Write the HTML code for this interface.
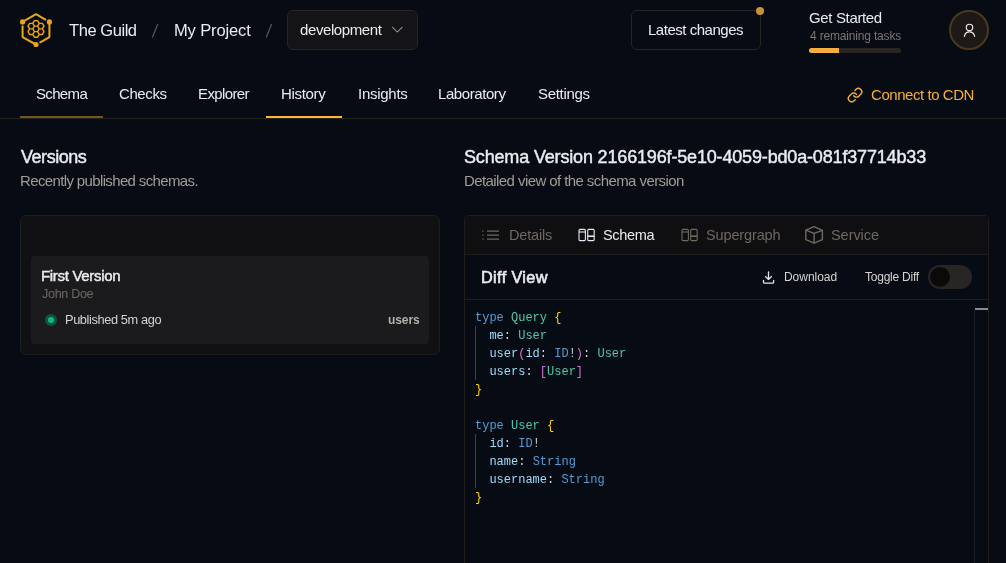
<!DOCTYPE html>
<html><head><meta charset="utf-8">
<style>
html,body{margin:0;padding:0}
body{width:1006px;height:563px;overflow:hidden;background:#070b13;position:relative;font-family:"Liberation Sans",sans-serif;color:#e4e7ed}
.a{position:absolute;white-space:nowrap;line-height:1;will-change:transform}
.sb{-webkit-text-stroke:0.45px currentColor}
.box{position:absolute;box-sizing:border-box}
</style></head>
<body>
<!-- HEADER -->
<svg class="a" style="left:0;top:0" width="60" height="60" viewBox="0 0 60 60">
  <g fill="none" stroke="#eaa616" stroke-width="2" stroke-linecap="round" stroke-linejoin="round">
    <path d="M22.58 21.9 L36 14.2 L45.4 19.6"/>
    <path d="M49.42 21.9 L49.42 37.1 L40.2 42.3"/>
    <path d="M22.58 26.3 L22.58 37.1 L36 44.5"/>
  </g>
  <g fill="#eaa616">
    <circle cx="22.58" cy="21.9" r="2.6"/>
    <circle cx="49.42" cy="21.9" r="2.6"/>
    <circle cx="36" cy="44.5" r="2.6"/>
  </g>
  <path fill="none" stroke="#eaa616" stroke-width="1.4" stroke-linejoin="round" d="M39.20 28.90 37.60 31.67 34.40 31.67 32.80 28.90 34.40 26.13 37.60 26.13ZM39.20 23.36 37.60 26.13 34.40 26.13 32.80 23.36 34.40 20.59 37.60 20.59ZM39.20 34.44 37.60 37.21 34.40 37.21 32.80 34.44 34.40 31.67 37.60 31.67ZM34.40 26.13 32.80 28.90 29.60 28.90 28.00 26.13 29.60 23.36 32.80 23.36ZM44.00 26.13 42.40 28.90 39.20 28.90 37.60 26.13 39.20 23.36 42.40 23.36ZM34.40 31.67 32.80 34.44 29.60 34.44 28.00 31.67 29.60 28.90 32.80 28.90ZM44.00 31.67 42.40 34.44 39.20 34.44 37.60 31.67 39.20 28.90 42.40 28.90Z"/>
</svg>
<svg class="a" style="left:0;top:0" width="300" height="50"><path d="M157.6 24.4 L152.6 37 M271.4 24.4 L266.4 37" stroke="#5a534e" stroke-width="1.3" stroke-linecap="round"/></svg>


<div class="box" style="left:287px;top:10px;width:131px;height:40px;border:1px solid #292524;border-radius:6px;background:#141316"></div>
<svg class="a" style="left:388px;top:22px" width="18" height="16" viewBox="0 0 18 16">
  <path d="M4.6 5.3 L9.3 10 L14 5.3" fill="none" stroke="#9a948f" stroke-width="1.05" stroke-linecap="round" stroke-linejoin="round"/>
</svg>

<div class="box" style="left:631px;top:10px;width:130px;height:40px;border:1px solid #292524;border-radius:6px"></div>
<div class="box" style="left:756px;top:7px;width:8px;height:8px;border-radius:50%;background:#c8923a"></div>

<div class="box" style="left:809px;top:48px;width:92px;height:5px;border-radius:3px;background:#292524;overflow:hidden"><div style="width:30px;height:5px;background:#f5ae3d"></div></div>

<div class="box" style="left:949px;top:10px;width:40px;height:40px;border-radius:50%;border:2px solid #4a391d;background:#1c1917"></div>


<svg class="a" style="left:949px;top:10px" width="40" height="40" viewBox="0 0 40 40">
  <g fill="none" stroke="#f0efee" stroke-width="1.15" stroke-linecap="round">
    <circle cx="20.5" cy="17.4" r="3.2"/>
    <path d="M15.4 26.4 A5.2 5.6 0 0 1 25.6 26.4"/>
  </g>
</svg>
<svg class="a" style="left:846.6px;top:86.6px" width="16.2" height="16.2" viewBox="0 0 24 24">
  <g fill="none" stroke="#f5ae3d" stroke-width="2.1" stroke-linecap="round" stroke-linejoin="round">
    <path d="M10 13a5 5 0 0 0 7.54.54l3-3a5 5 0 0 0-7.07-7.07l-1.72 1.71"/>
    <path d="M14 11a5 5 0 0 0-7.54-.54l-3 3a5 5 0 0 0 7.07 7.070l1.71-1.71"/>
  </g>
</svg>
<!-- NAV -->
<div class="box" style="left:20px;top:116px;width:83px;height:2px;background:#72561f"></div>
<div class="box" style="left:266px;top:116px;width:76px;height:2px;background:#fbb535"></div>
<div class="box" style="left:0;top:118px;width:1006px;height:1px;background:#25211f"></div>


<!-- LEFT -->

<div class="box" style="left:20px;top:215px;width:420px;height:140px;border:1px solid #1e1c1c;border-radius:6px;background:#111114"></div>
<div class="box" style="left:31px;top:256px;width:398px;height:88px;border-radius:4px;background:#1b1a1c"></div>
<div class="box" style="left:45px;top:314px;width:12px;height:12px;border-radius:50%;background:#0c5640"></div>
<div class="box" style="left:48px;top:317px;width:6px;height:6px;border-radius:50%;background:#10b981"></div>

<!-- RIGHT -->


<!-- PANEL -->
<div class="box" style="left:464px;top:215px;width:525px;height:400px;border:1px solid #1f1c1a;border-radius:4px;background:#070b13;overflow:hidden">
  <div class="box" style="left:0;top:0;width:523px;height:39px;background:#0f0f11;border-bottom:1px solid #1f1c1a"></div>
  <div class="box" style="left:0;top:83px;width:523px;height:1px;background:#1f1c1a"></div>
  <div class="box" style="left:509px;top:94px;width:1px;height:400px;background:#1a1d23"></div>
  <div class="box" style="left:510px;top:92px;width:13px;height:2px;background:#8a8a8a"></div>
</div>
<svg class="a" style="left:480px;top:227px" width="22" height="16" viewBox="0 0 22 16">
  <g stroke="#6f6863" stroke-width="1.25" fill="none">
    <path d="M2.3 4h1.2M2.3 8h1.2M2.3 12h1.2"/>
    <path d="M7 4h12M7 8h12M7 12h12"/>
  </g>
</svg>
<svg class="a" style="left:576px;top:226px" width="22" height="18" viewBox="0 0 22 18">
  <g stroke="#e4e7ed" stroke-width="1.1" fill="none">
    <rect x="3" y="3.4" width="6.4" height="11.2" rx="1"/>
    <path d="M3 6h6.4"/>
    <rect x="11.7" y="3.4" width="6.5" height="11.2" rx="1"/>
    <path d="M11.7 10.2h6.5" stroke-width="1.6"/>
  </g>
</svg>
<svg class="a" style="left:679px;top:226px" width="22" height="18" viewBox="0 0 22 18">
  <g stroke="#6f6863" stroke-width="1.1" fill="none">
    <rect x="3" y="3.4" width="6.4" height="11.2" rx="1"/>
    <path d="M3 6h6.4"/>
    <rect x="11.7" y="3.4" width="6.5" height="11.2" rx="1"/>
    <path d="M11.7 10.2h6.5" stroke-width="1.6"/>
  </g>
</svg>
<svg class="a" style="left:802px;top:224px" width="24" height="22" viewBox="0 0 24 22">
  <g stroke="#6f6863" stroke-width="1.4" fill="none" stroke-linejoin="round">
    <path d="M12.1 2.6 L20.4 6.4 L20.4 15.6 L12.1 19.2 L3.8 15.6 L3.8 6.2 Z"/>
    <path d="M3.8 6.2 L12.1 9.4 L20.4 6.4 M12.1 9.4 L12.1 19.2"/>
  </g>
</svg>

<svg class="a" style="left:758px;top:266px" width="22" height="22" viewBox="0 0 22 22">
  <g stroke="#e4e7ed" stroke-width="1.3" fill="none" stroke-linecap="round" stroke-linejoin="round">
    <path d="M10.5 5.9 V13.3 M7.5 10.6 L10.5 13.4 L13.5 10.6"/>
    <path d="M5.5 14.3 V16.2 Q5.5 17.2 6.5 17.2 H14.6 Q15.6 17.2 15.6 16.2 V14.3"/>
  </g>
</svg>
<div class="box" style="left:928px;top:265px;width:44px;height:24px;border-radius:12px;background:#292524"></div>
<div class="box" style="left:930px;top:267px;width:20px;height:20px;border-radius:50%;background:#0c0a09"></div>

<!-- CODE -->
<style>
.code{will-change:transform;position:absolute;left:475px;top:309px;font-family:"Liberation Mono",monospace;font-size:12px;line-height:18px;white-space:pre;color:#d4d4d4}
.k{color:#569cd6}.t{color:#4ec9b0}.f{color:#9cdcfe}.b1{color:#ffd700}.b2{color:#da70d6}.s{color:#569cd6}
</style>
<div class="box" style="left:475px;top:326px;width:1px;height:54px;background:#404040"></div>
<div class="box" style="left:475px;top:434px;width:1px;height:54px;background:#404040"></div>
<div class="code"><span class="k">type</span> <span class="t">Query</span> <span class="b1">{</span>
  <span class="f">me</span>: <span class="t">User</span>
  <span class="f">user</span><span class="b2">(</span><span class="f">id</span>: <span class="s">ID</span>!<span class="b2">)</span>: <span class="t">User</span>
  <span class="f">users</span>: <span class="b2">[</span><span class="t">User</span><span class="b2">]</span>
<span class="b1">}</span>

<span class="k">type</span> <span class="t">User</span> <span class="b1">{</span>
  <span class="f">id</span>: <span class="s">ID</span>!
  <span class="f">name</span>: <span class="s">String</span>
  <span class="f">username</span>: <span class="s">String</span>
<span class="b1">}</span></div>
<!-- TEXT -->
<div class="a" style="left:68.9px;top:22px;font-size:16.5px;letter-spacing:-0.438px;color:#eaecf0">The Guild</div>
<div class="a" style="left:173.6px;top:22px;font-size:16.5px;letter-spacing:-0.133px;color:#eaecf0">My Project</div>
<div class="a" style="left:299.6px;top:22px;font-size:15px;letter-spacing:-0.4px;color:#eaecf0">development</div>
<div class="a" style="left:648.1px;top:22px;font-size:15px;letter-spacing:-0.477px;color:#eaecf0">Latest changes</div>
<div class="a" style="left:808.5px;top:10px;font-size:15px;letter-spacing:-0.35px;color:#eaecf0">Get Started</div>
<div class="a" style="left:809.5px;top:30px;font-size:12px;letter-spacing:-0.176px;color:#7c7570">4 remaining tasks</div>
<div class="a" style="left:35.9px;top:86px;font-size:15px;letter-spacing:-0.66px;color:#eaecf0">Schema</div>
<div class="a" style="left:118.5px;top:86px;font-size:15px;letter-spacing:-0.4px;color:#eaecf0">Checks</div>
<div class="a" style="left:198.3px;top:86px;font-size:15px;letter-spacing:-0.628px;color:#eaecf0">Explorer</div>
<div class="a" style="left:281.3px;top:86px;font-size:15px;letter-spacing:-0.333px;color:#eaecf0">History</div>
<div class="a" style="left:357.6px;top:86px;font-size:15px;letter-spacing:-0.272px;color:#eaecf0">Insights</div>
<div class="a" style="left:438.3px;top:86px;font-size:15px;letter-spacing:-0.423px;color:#eaecf0">Laboratory</div>
<div class="a" style="left:537.7px;top:86px;font-size:15px;letter-spacing:-0.3px;color:#eaecf0">Settings</div>
<div class="a" style="left:870.5px;top:87px;font-size:15px;letter-spacing:-0.446px;color:#f5ae3d">Connect to CDN</div>
<div class="a" style="left:21.1px;top:148px;font-size:18px;letter-spacing:-0.457px;color:#eaecf0;-webkit-text-stroke:0.45px #eaecf0">Versions</div>
<div class="a" style="left:20.0px;top:173px;font-size:15px;letter-spacing:-0.635px;color:#a29c97">Recently published schemas.</div>
<div class="a" style="left:40.8px;top:268px;font-size:15px;letter-spacing:-0.317px;color:#eaecf0;-webkit-text-stroke:0.45px #eaecf0">First Version</div>
<div class="a" style="left:41.5px;top:288px;font-size:12.5px;letter-spacing:-0.286px;color:#6f6863">John Doe</div>
<div class="a" style="left:65.0px;top:314px;font-size:12.8px;letter-spacing:-0.393px;color:#d6d3d1">Published 5m ago</div>
<div class="a" style="left:387.9px;top:314px;font-size:12px;letter-spacing:-0.1px;color:#b5b0ab;font-weight:700">users</div>
<div class="a" style="left:463.9px;top:148px;font-size:18px;letter-spacing:-0.164px;color:#eaecf0;-webkit-text-stroke:0.45px #eaecf0">Schema Version 2166196f-5e10-4059-bd0a-081f37714b33</div>
<div class="a" style="left:463.5px;top:173px;font-size:15px;letter-spacing:-0.582px;color:#a29c97">Detailed view of the schema version</div>
<div class="a" style="left:508.9px;top:228px;font-size:14.5px;letter-spacing:-0.167px;color:#6f6863">Details</div>
<div class="a" style="left:603.2px;top:228px;font-size:14.5px;letter-spacing:-0.32px;color:#eaecf0">Schema</div>
<div class="a" style="left:706.2px;top:228px;font-size:14.5px;letter-spacing:-0.133px;color:#6f6863">Supergraph</div>
<div class="a" style="left:830.9px;top:228px;font-size:14.5px;letter-spacing:-0.051px;color:#6f6863">Service</div>
<div class="a" style="left:481.0px;top:269px;font-size:16.3px;letter-spacing:0.35px;color:#eaecf0;-webkit-text-stroke:0.6px #eaecf0">Diff View</div>
<div class="a" style="left:783.8px;top:271px;font-size:12px;letter-spacing:-0.042px;color:#d6d3d1">Download</div>
<div class="a" style="left:865.3px;top:271px;font-size:12px;letter-spacing:-0.23px;color:#d6d3d1">Toggle Diff</div>
</body></html>
